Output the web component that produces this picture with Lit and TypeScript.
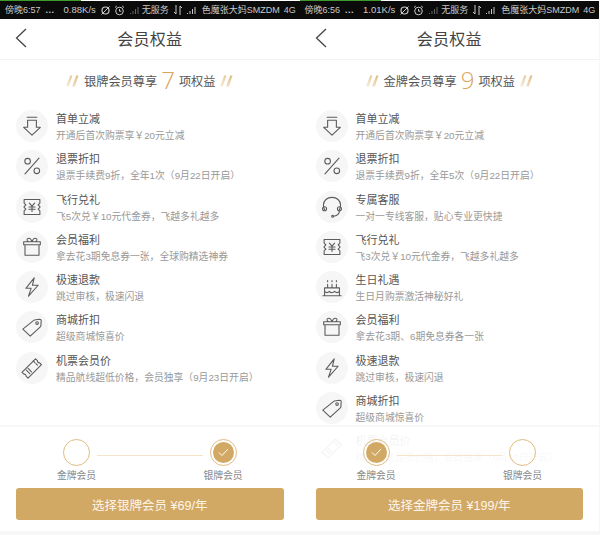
import { LitElement, html, css, svg } from "lit";
import { customElement } from "lit/decorators.js";

const S = `fill="none" stroke="#5c5c5c" stroke-width="1.25" stroke-linecap="round" stroke-linejoin="round"`;
const icon = (body: string) => html`<svg class="ic" viewBox="0 0 32 32" .innerHTML=${body}></svg>`;
const ICONS: Record<string, string> = {
  down: `<g ${S}><path d="M10.500 6h11"/><path d="M11 9.500h10v8h4.500L16 26.500 6.500 17.500H11z"/></g>`,
  pct: `<g ${S}><circle cx="11" cy="10.500" r="3.200"/><circle cx="21.500" cy="21.500" r="3.200"/><path d="M24 7 8 25"/></g>`,
  ticket: `<g ${S}><path d="M7 7.500h18v4l-2 2 2 2v1l-2 2 2 2v4H7v-4l2-2-2-2v-1l2-2-2-2z"/><path d="M13 11.500l3 3.500 3-3.500M16 15v6M12.500 16h7M12.500 18.500h7"/></g>`,
  gift: `<g ${S}><path d="M8 13.500v12h16v-12M6.500 10h19v3.500h-19zM12.500 10c-3-1-3-4 0-4 1.800 0 2.800 2 3.500 4 .7-2 1.700-4 3.500-4 3 0 3 3 0 4"/></g>`,
  bolt: `<path ${S} d="M18.500 5.500 9 17.500h6L12 26.500l11-12.500h-6.500z"/>`,
  tag: `<g ${S}><path d="M18 8.500c.5-.5 1-.8 2-.8l5-.5c1 0 1.500.5 1.500 1.500l-.3 5.300c0 1-.3 1.500-1 2.200L14 26.500 5.500 18.500z"/><circle cx="21.800" cy="11.500" r="1.500"/></g>`,
  plane: `<g ${S}><path d="M4.500 21 20 5.500l2.200 2.200a2 2 0 0 0 2.300 2.300l2.300 2.200L11.500 27.500 9.200 25.300a2 2 0 0 0-2.400-2.300z"/><path d="M17.500 8l1.800 1.800M20.500 11l1.800 1.800M11.500 16.500l4 4M9.500 18.500l4 4"/></g>`,
  head: `<g ${S}><path d="M7.500 19C6.500 17 6.200 15.500 6.200 14 6.200 8.500 10.500 5 16 5s9.800 3.500 9.800 9c0 1.500-.3 3-1.300 5"/><circle cx="7.500" cy="18" r="2.300"/><circle cx="24.500" cy="18" r="2.300"/><path d="M24.500 20.300c0 3.500-3 5.700-6.500 6.200"/><circle cx="16.700" cy="26.700" r="1.100"/></g>`,
  cake: `<g ${S}><path d="M5.500 26h21M7.500 26v-9h17v9M7.500 21c2 2 3.500 2 5.500 0 1.500 2 4 2 6 0 2 2 3.500 2 5.500 0M11 17v-4M16 17v-4M21 17v-4M11 10V8.500M16 10V8.500M21 10V8.500"/></g>`,
};

const SILVER = [
  ["down", "首单立减", "开通后首次购票享￥20元立减"],
  ["pct", "退票折扣", "退票手续费9折，全年1次（9月22日开启）"],
  ["ticket", "飞行兑礼", "飞5次兑￥10元代金券，飞越多礼越多"],
  ["gift", "会员福利", "拿去花3期免息券一张，全球购精选神券"],
  ["bolt", "极速退款", "跳过审核，极速闪退"],
  ["tag", "商城折扣", "超级商城惊喜价"],
  ["plane", "机票会员价", "精品航线超低价格，会员独享（9月23日开启）"],
];
const GOLD = [
  ["down", "首单立减", "开通后首次购票享￥20元立减"],
  ["pct", "退票折扣", "退票手续费9折，全年5次（9月22日开启）"],
  ["head", "专属客服", "一对一专线客服，贴心专业更快捷"],
  ["ticket", "飞行兑礼", "飞3次兑￥10元代金券，飞越多礼越多"],
  ["cake", "生日礼遇", "生日月购票激活神秘好礼"],
  ["gift", "会员福利", "拿去花3期、6期免息券各一张"],
  ["bolt", "极速退款", "跳过审核，极速闪退"],
  ["tag", "商城折扣", "超级商城惊喜价"],
  ["plane", "机票会员价", "精品航线超低价格，会员独享（9月23日开启）"],
];

const slashes = svg`<path d="M4.500 0h2.500L3 12H0zM11 0h2.500L9.500 12H6.500z" fill="url(#sl)"/>`;
const mark = () => html`<svg class="sl" viewBox="0 0 14 12"><defs><linearGradient id="sl" x1="0" y1="1" x2="1" y2="0"><stop offset="0" stop-color="#f8efe0"/><stop offset="1" stop-color="#dfbb80"/></linearGradient></defs>${slashes}</svg>`;

@customElement("app-root")
export class AppRoot extends LitElement {
  static styles = css`
    :host { display: flex; width: 600px; height: 535px; overflow: hidden; background: #f7f7f7;
      font-family: "Liberation Sans", "Noto Sans CJK SC", sans-serif; }
    .phone { width: 299.500px; height: 531px; flex: none; display: flex; flex-direction: column; position: relative; overflow: hidden; background: #fff; }
    .status { height: 18px; margin-top: 1px; background: #0b0b0b; color: #c9c9c9; font-size: 9px; line-height: 18px; flex: none;
      display: flex; align-items: center; padding: 0 5px; white-space: nowrap; position: relative; }
    .progress { position: absolute; left: 0; top: -1px; height: 1px; width: 81px; background: #3d9a2c; }
    .status svg { flex: none; }
    .speed { font-size: 9.500px; margin-left: 9px; }
    .dots { margin-left: 5px; font-weight: 700; letter-spacing: .5px; }
    .i1 { margin-left: 4px; } .i2 { margin-left: 3px; } .i3 { margin-left: 5px; }
    .nosvc { margin-left: 3px; } .arrows { margin-left: 5px; } .sig { margin-left: 5px; }
    .app { margin-left: 6px; } .net { margin-left: 4px; }
    .nav { height: 41px; flex: none; display: flex; align-items: center; justify-content: center; position: relative; border-bottom: 1px solid #f3f3f3;
      box-sizing: border-box; padding-bottom: 3px; font-size: 16px; color: #444; letter-spacing: .25px; }
    .back { position: absolute; left: 15px; top: 9px; width: 12px; height: 20px; }
    .title { flex: none; height: 42px; display: flex; align-items: center; justify-content: center; gap: 3px; font-size: 12.200px; color: #555; }
    .num { font-size: 24px; font-weight: 300; color: #dba55a; line-height: 1; margin: -2px 1px 0; font-family: "Open Sans", sans-serif; }
    .sl { width: 13px; height: 12px; margin: 0 2px; }
    .list { flex: none; display: flex; flex-direction: column; gap: 8.300px; padding: 8px 0 0 16px; }
    .row { display: flex; align-items: center; gap: 8px; height: 32px; }
    .circ { width: 32px; height: 32px; border-radius: 50%; background: #f6f6f6; flex: none; display: flex; align-items: center; justify-content: center; }
    .ic { width: 28px; height: 28px; }
    .txt { padding-top: 3px; }
    .t { font-size: 11px; line-height: 15px; color: #555; white-space: nowrap; }
    .d { font-size: 9.800px; line-height: 14px; margin-top: 2px; color: #999; white-space: nowrap; }
    .foot { position: absolute; left: 0; right: 0; top: 425px; height: 106px; background: rgba(255,255,255,.93); border-top: 2px solid #f7f7f7; box-sizing: border-box; padding: 0 16px; }
    .steps { display: flex; justify-content: space-between; align-items: flex-start; padding: 12px 47px 0; height: 49px; position: relative; box-sizing: content-box; }
    .step { display: flex; flex-direction: column; align-items: center; width: 27px; position: relative; }
    .dot { width: 27px; height: 27px; border-radius: 50%; border: 1px solid #dfbb80; box-sizing: border-box; display: flex; align-items: center; justify-content: center; flex: none; }
    .inner { width: 21px; height: 21px; border-radius: 50%; background: #d2a865; display: flex; align-items: center; justify-content: center; }
    .lbl { font-size: 9.800px; line-height: 12px; margin-top: 4px; color: #888; white-space: nowrap; }
    .line { position: absolute; left: 81px; right: 81px; top: 28px; height: 1px; background: #f5e4c8; }
    .btn { height: 32px; border-radius: 3px; background: #d2a865; color: #fff6e8; display: flex; align-items: center; justify-content: center; font-size: 12.500px; }
  `;

  private status(time: string, speed: string) {
    return html`<div class="status"><div class="progress"></div>
      <span>傍晚${time}</span><span class="dots">...</span>
      <span class="speed">${speed}</span>
      <svg class="i1" width="11" height="11" viewBox="0 0 11 11"><circle cx="5.500" cy="5.500" r="3.500" fill="none" stroke="#c9c9c9" stroke-width="1.200"/><path d="M1.500 9.500l8-8" stroke="#c9c9c9"/></svg>
      <svg class="i2" width="11" height="11" viewBox="0 0 11 11"><circle cx="5.500" cy="6" r="3.800" fill="none" stroke="#c9c9c9"/><path d="M5.500 4v2.200h1.800M1 2.500 2.800 1M10 2.500 8.200 1" fill="none" stroke="#c9c9c9"/></svg>
      <svg class="i3" width="9" height="8" viewBox="0 0 9 8"><path d="M0 8h1V7H0zM2.500 8h1V5h-1zM5 8h1V3H5zM7.500 8h1V1h-1z" fill="#666"/></svg>
      <span class="nosvc">无服务</span>
      <svg class="arrows" width="8" height="10" viewBox="0 0 8 10"><path d="M2 0v9M0 7l2 2M6 10V1M8 3 6 1" fill="none" stroke="#c9c9c9"/></svg>
      <svg class="sig" width="9" height="8" viewBox="0 0 9 8"><path d="M0 8h1V7H0zM2.500 8h1V5h-1zM5 8h1V3H5zM7.500 8h1V1h-1z" fill="#c9c9c9"/></svg>
      <span class="app">色魔张大妈SMZDM</span><span class="net">4G</span></div>`;
  }

  private phone(time: string, speed: string, name: string, n: string, list: string[][], price: string, gold: boolean) {
    const check = html`<div class="inner"><svg width="11" height="9" viewBox="0 0 11 9"><path d="M1 4.500 4 7.500 10 1" fill="none" stroke="#fff" stroke-width="1"/></svg></div>`;
    return html`<div class="phone">
      ${this.status(time, speed)}
      <div class="nav"><svg class="back" viewBox="0 0 12 20"><path d="M11 1 1.500 10l9.500 9" fill="none" stroke="#444" stroke-width="1.300"/></svg>会员权益</div>
      <div class="title">${mark()}<span>${name}尊享</span><span class="num">${n}</span><span>项权益</span>${mark()}</div>
      <div class="list">
        ${list.map(r => html`<div class="row"><div class="circ">${icon(ICONS[r[0]])}</div><div class="txt"><div class="t">${r[1]}</div><div class="d">${r[2]}</div></div></div>`)}
      </div>
      <div class="foot">
        <div class="steps">
          <div class="line"></div>
          <div class="step"><div class="dot">${gold ? check : ""}</div><div class="lbl">金牌会员</div></div>
          <div class="step"><div class="dot">${gold ? "" : check}</div><div class="lbl">银牌会员</div></div>
        </div>
        <div class="btn">选择${name} ${price}/年</div>
      </div>
    </div>`;
  }

  render() {
    return html`
      ${this.phone("6:57", "0.88K/s", "银牌会员", "7", SILVER, "¥69", false)}
      ${this.phone("6:56", "1.01K/s", "金牌会员", "9", GOLD, "¥199", true)}
    `;
  }
}
